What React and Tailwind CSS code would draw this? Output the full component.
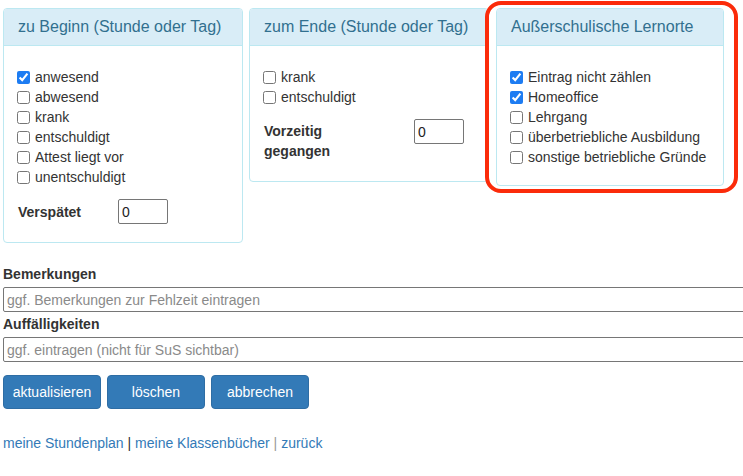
import React from "react";

const font = { fontFamily: '"Liberation Sans", Arial, sans-serif' };

function Check({ label, checked }) {
  return (
    <label className="flex h-5 items-center text-[14px] leading-5 text-[#333]">
      <input
        type="checkbox"
        defaultChecked={checked}
        className="m-0 mr-[5px] h-[13px] w-[13px] accent-[#1d7cf2]"
      />
      <span>{label}</span>
    </label>
  );
}

function Panel({ title, width, children, bodyClass, className = "" }) {
  return (
    <div
      className={"shrink-0 rounded-[4px] border border-[#bce8f1] bg-white " + className}
      style={{ width }}
    >
      <div className="h-[37px] rounded-t-[3px] border-b border-[#bce8f1] bg-[#d9edf7] px-[14px] pt-[9px] text-[16px] leading-[18px] text-[#31708f]">
        {title}
      </div>
      <div className={bodyClass}>{children}</div>
    </div>
  );
}

function NumberBox() {
  return (
    <input
      type="text"
      defaultValue="0"
      className="h-[25px] w-[50px] rounded-[2px] border border-[#767676] bg-white pl-[3px] text-[14px] text-[#222] outline-none"
    />
  );
}

function Btn({ children }) {
  return (
    <button className="h-[34px] w-[98px] rounded-[4px] border border-[#2e6da4] bg-[#337ab7] text-[14px] text-white">
      {children}
    </button>
  );
}

export default function App() {
  return (
    <div className="min-h-[476px] overflow-hidden bg-white pl-[3px] text-[#333]" style={font}>
      <div className="flex items-start pt-[8px]">
        <Panel
          title="zu Beginn (Stunde oder Tag)"
          width={240}
          bodyClass="px-[13px] pt-[21px] pb-[18px]"
        >
          <Check label="anwesend" checked />
          <Check label="abwesend" />
          <Check label="krank" />
          <Check label="entschuldigt" />
          <Check label="Attest liegt vor" />
          <Check label="unentschuldigt" />
          <div className="mt-[12px] flex items-center">
            <span className="w-[101px] pl-px text-[14px] font-bold leading-5">Verspätet</span>
            <NumberBox />
          </div>
        </Panel>

        <Panel
          title="zum Ende (Stunde oder Tag)"
          width={240}
          className="ml-[6px]"
          bodyClass="px-[13px] pt-[21px] pb-[20px]"
        >
          <Check label="krank" />
          <Check label="entschuldigt" />
          <div className="mt-[12px] flex items-start">
            <span className="w-[151px] pl-px pt-[2px] text-[14px] font-bold leading-5">
              Vorzeitig
              <br />
              gegangen
            </span>
            <NumberBox />
          </div>
        </Panel>

        <div className="relative ml-[7px]">
          <Panel
            title="Außerschulische Lernorte"
            width={228}
            bodyClass="px-[13px] pt-[21px] pb-[18px]"
          >
            <Check label="Eintrag nicht zählen" checked />
            <Check label="Homeoffice" checked />
            <Check label="Lehrgang" />
            <Check label="überbetriebliche Ausbildung" />
            <Check label="sonstige betriebliche Gründe" />
          </Panel>
          {/* highlight frame around the panel */}
          <div className="pointer-events-none absolute -top-[7px] -bottom-[7px] -left-[11px] -right-[14px] rounded-[16px] border-[4px] border-[#fb2b0a]" />
        </div>
      </div>

      <div className="mt-[21px] text-[14px] font-bold leading-5">Bemerkungen</div>
      <input
        type="text"
        placeholder="ggf. Bemerkungen zur Fehlzeit eintragen"
        className="mt-[3px] block h-[25px] w-[800px] rounded-[2px] border border-[#767676] bg-white pl-[3px] text-[14px] outline-none placeholder:text-[#8a8a8a]"
      />
      <div className="mt-[2px] text-[14px] font-bold leading-5">Auffälligkeiten</div>
      <input
        type="text"
        placeholder="ggf. eintragen (nicht für SuS sichtbar)"
        className="mt-[3px] block h-[25px] w-[800px] rounded-[2px] border border-[#767676] bg-white pl-[3px] text-[14px] outline-none placeholder:text-[#8a8a8a]"
      />

      <div className="mt-[13px] flex gap-[6px]">
        <Btn>aktualisieren</Btn>
        <Btn>löschen</Btn>
        <Btn>abbrechen</Btn>
      </div>

      <div className="mt-[24px] text-[14px] leading-5">
        <a href="#" className="text-[#337ab7]">meine Stundenplan</a>
        <span className="text-[#333]"> | </span>
        <a href="#" className="text-[#337ab7]">meine Klassenbücher</a>
        <span className="text-[#999]"> | </span>
        <a href="#" className="text-[#337ab7]">zurück</a>
      </div>
    </div>
  );
}
